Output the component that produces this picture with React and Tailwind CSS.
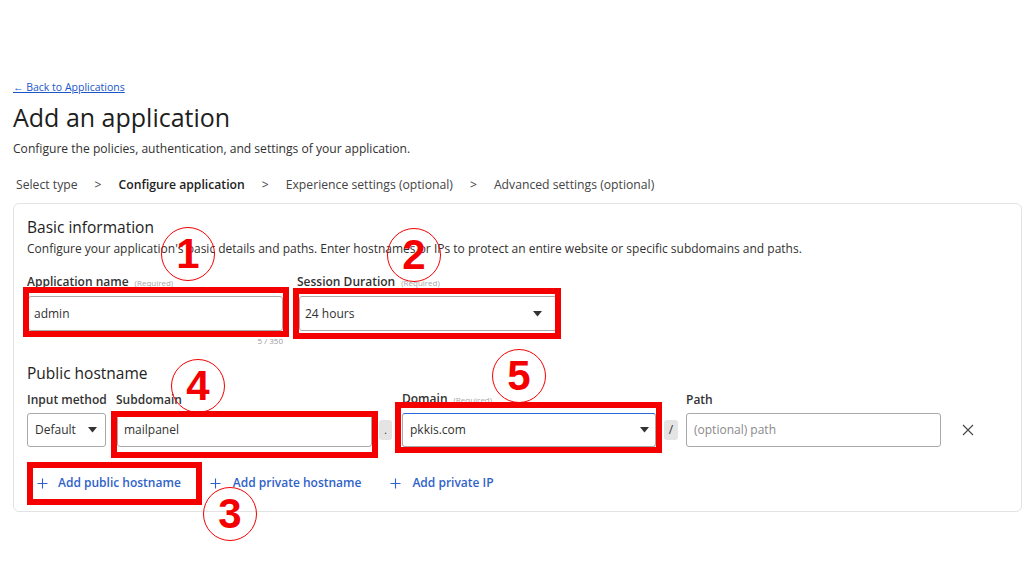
import React from "react";

const Caret = () => (
  <svg width="9" height="6" viewBox="0 0 9 6" className="shrink-0">
    <path d="M0 0 L9 0 L4.5 5.5 Z" fill="#333" />
  </svg>
);

const Plus = () => (
  <svg width="11" height="11" viewBox="0 0 11 11" className="shrink-0">
    <path d="M5.5 0.5 V10.5 M0.5 5.5 H10.5" stroke="#2f62c9" strokeWidth="1.1" />
  </svg>
);

const Req = () => (
  <span className="ml-[6px] text-[8px] font-normal text-[#a8a8a8]">(Required)</span>
);

const RedBox = ({ cls }) => (
  <div className={`absolute border-[6px] border-[#f40000] pointer-events-none ${cls}`} />
);

const Num = ({ cls, n }) => (
  <div
    className={`absolute w-[54px] h-[54px] rounded-full border-[1.5px] border-[#f40000] flex items-center justify-center pointer-events-none ${cls}`}
  >
    <span
      className="text-[#f40000] text-[42px] font-bold leading-none"
      style={{ fontFamily: '"Liberation Sans", Arial, sans-serif' }}
    >
      {n}
    </span>
  </div>
);

export default function App() {
  return (
    <div
      className="w-[1024px] h-[576px] bg-white relative overflow-hidden text-[#313131]"
      style={{ fontFamily: '"Open Sans", "Noto Sans", sans-serif' }}
    >
      <div className="pt-[80px] pl-[13px]">
        <a className="block text-[10.5px] leading-[14px] text-[#1a56c9] underline">
          ← Back to Applications
        </a>
        <h1 className="mt-[6px] text-[25px] leading-[34px] text-[#1d1d1d] font-medium">
          Add an application
        </h1>
        <p className="mt-[7px] text-[12.1px] leading-[16px]">
          Configure the policies, authentication, and settings of your application.
        </p>
        <nav className="mt-[20px] ml-[3px] flex items-center text-[12.2px] leading-[16px] text-[#444]">
          <span>Select type</span>
          <span className="mx-[17px]">&gt;</span>
          <span className="font-semibold text-[#222]">Configure application</span>
          <span className="mx-[17px]">&gt;</span>
          <span>Experience settings (optional)</span>
          <span className="mx-[17px]">&gt;</span>
          <span>Advanced settings (optional)</span>
        </nav>

        <section className="mt-[10px] w-[1009px] border border-[#e3e3e3] rounded-[6px] pt-[13px] pl-[13px] pb-[19px]">
          <h2 className="text-[15.5px] leading-[20px] font-medium text-[#222]">Basic information</h2>
          <p className="mt-[4px] text-[12px] leading-[16px]">
            Configure your application's basic details and paths. Enter hostnames or IPs to protect an entire website or specific subdomains and paths.
          </p>

          <div className="mt-[17px] flex gap-[14px]">
            <div className="w-[256px]">
              <div className="text-[12px] leading-[16px] font-semibold text-[#333] flex items-baseline">
                Application name<Req />
              </div>
              <div className="mt-[5px] ml-[1px] h-[35px] border border-[#a9a9a9] rounded-[3px] flex items-center px-[5px] text-[12px]">
                admin
              </div>
              <div className="mt-[5px] text-right text-[8px] leading-[10px] text-[#999]">5 / 350</div>
            </div>
            <div className="w-[260px]">
              <div className="text-[12px] leading-[16px] font-semibold text-[#333] flex items-baseline">
                Session Duration<Req />
              </div>
              <div className="mt-[5px] ml-[2px] h-[35px] border border-[#a9a9a9] rounded-[3px] flex items-center justify-between pl-[5px] pr-[14px] text-[12px]">
                <span>24 hours</span>
                <Caret />
              </div>
            </div>
          </div>

          <h2 className="mt-[17px] text-[15.5px] leading-[20px] font-medium text-[#222]">Public hostname</h2>

          <div className="mt-[8px] flex items-end">
            <div className="w-[79px]">
              <div className="text-[12px] leading-[16px] font-semibold text-[#333] whitespace-nowrap">Input method</div>
              <div className="mt-[5px] h-[34px] border border-[#a9a9a9] rounded-[3px] flex items-center justify-between pl-[7px] pr-[8px] text-[12px]">
                <span>Default</span>
                <Caret />
              </div>
            </div>
            <div className="ml-[11px] w-[255px]">
              <div className="text-[12px] leading-[16px] font-semibold text-[#333] -ml-[1px]">Subdomain</div>
              <div className="mt-[5px] h-[34px] border border-[#a9a9a9] rounded-[3px] flex items-center px-[6px] text-[12px]">
                mailpanel
              </div>
            </div>
            <div className="ml-[7px] mb-[7px] w-[13px] h-[20px] bg-[#e4e4e4] rounded-[3px] flex items-center justify-center text-[10px] leading-none">
              .
            </div>
            <div className="ml-[10px] w-[254px]">
              <div className="text-[12px] leading-[16px] font-semibold text-[#333] flex items-baseline">
                Domain<Req />
              </div>
              <div className="mt-[5px] h-[34px] border border-[#a9a9a9] border-t-[#2a6be0] rounded-[3px] flex items-center justify-between pl-[7px] pr-[6px] text-[12px]">
                <span>pkkis.com</span>
                <Caret />
              </div>
            </div>
            <div className="ml-[8px] mb-[7px] w-[14px] h-[20px] bg-[#e4e4e4] rounded-[3px] flex items-center justify-center text-[12px] leading-none">
              /
            </div>
            <div className="ml-[8px] w-[255px]">
              <div className="text-[12px] leading-[16px] font-semibold text-[#333]">Path</div>
              <div className="mt-[5px] h-[34px] border border-[#a9a9a9] rounded-[3px] flex items-center px-[7px] text-[12px] text-[#8a8a8a]">
                (optional) path
              </div>
            </div>
            <div className="ml-[21px] mb-[11px]">
              <svg width="12" height="12" viewBox="0 0 12 12">
                <path d="M1 1 L11 11 M11 1 L1 11" stroke="#444" strokeWidth="1.1" />
              </svg>
            </div>
          </div>

          <div className="mt-[27px] flex items-center text-[12px] leading-[18px] font-semibold text-[#2f62c9]">
            <div className="ml-[10px] flex items-center gap-[10px]">
              <Plus />
              <span>Add public hostname</span>
            </div>
            <div className="ml-[29px] flex items-center gap-[12px]">
              <Plus />
              <span>Add private hostname</span>
            </div>
            <div className="ml-[29px] flex items-center gap-[11px]">
              <Plus />
              <span>Add private IP</span>
            </div>
          </div>
        </section>
      </div>

      {/* annotation overlays */}
      <RedBox cls="left-[23px] top-[287px] w-[266px] h-[50px]" />
      <RedBox cls="left-[293px] top-[288px] w-[268px] h-[51px]" />
      <RedBox cls="left-[111px] top-[411px] w-[267px] h-[47px]" />
      <RedBox cls="left-[27px] top-[462px] w-[175px] h-[43px]" />
      <RedBox cls="left-[395px] top-[402px] w-[267px] h-[51px]" />

      <Num cls="left-[161px] top-[227px]" n="1" />
      <Num cls="left-[387px] top-[228px]" n="2" />
      <Num cls="left-[203px] top-[487px]" n="3" />
      <Num cls="left-[171px] top-[359px]" n="4" />
      <Num cls="left-[492px] top-[349px]" n="5" />
    </div>
  );
}
